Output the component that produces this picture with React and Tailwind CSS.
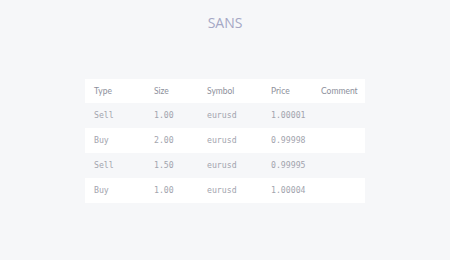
import React from 'react';

const rows = [
  { type: 'Sell', size: '1.00', symbol: 'eurusd', price: '1.00001' },
  { type: 'Buy', size: '2.00', symbol: 'eurusd', price: '0.99998' },
  { type: 'Sell', size: '1.50', symbol: 'eurusd', price: '0.99995' },
  { type: 'Buy', size: '1.00', symbol: 'eurusd', price: '1.00004' },
];

const App = () => {
  return (
    <div className="w-[450px] h-[260px] bg-[#f6f7f9] flex flex-col items-center">
      <h1 className="mt-[13px] text-[14px] leading-[20px] text-[#a5a7c5] font-['Open_Sans',sans-serif]">SANS</h1>
      <table className="mt-[46px] w-[280px] border-collapse table-fixed">
        <colgroup>
          <col className="w-[60px]" />
          <col className="w-[53px]" />
          <col className="w-[64px]" />
          <col className="w-[50px]" />
          <col className="w-[53px]" />
        </colgroup>
        <thead>
          <tr className="bg-white h-[24px] text-left text-[8.5px] text-[#8d909c] font-['Lato',sans-serif]">
            <th className="font-normal pl-[9px]">Type</th>
            <th className="font-normal pl-[9px]">Size</th>
            <th className="font-normal pl-[9px]">Symbol</th>
            <th className="font-normal pl-[9px]">Price</th>
            <th className="font-normal pl-[9px]">Comment</th>
          </tr>
        </thead>
        <tbody className="text-[8.2px] text-[#a2a4ae] font-['DejaVu_Sans_Mono',monospace]">
          {rows.map((r, i) => (
            <tr key={i} className={`h-[25px] ${i % 2 === 0 ? 'bg-[#f6f7f9]' : 'bg-white'}`}>
              <td className="pl-[9px]">{r.type}</td>
              <td className="pl-[9px]">{r.size}</td>
              <td className="pl-[9px]">{r.symbol}</td>
              <td className="pl-[9px]">{r.price}</td>
              <td className="pl-[9px]"></td>
            </tr>
          ))}
        </tbody>
      </table>
    </div>
  );
};

export default App;
